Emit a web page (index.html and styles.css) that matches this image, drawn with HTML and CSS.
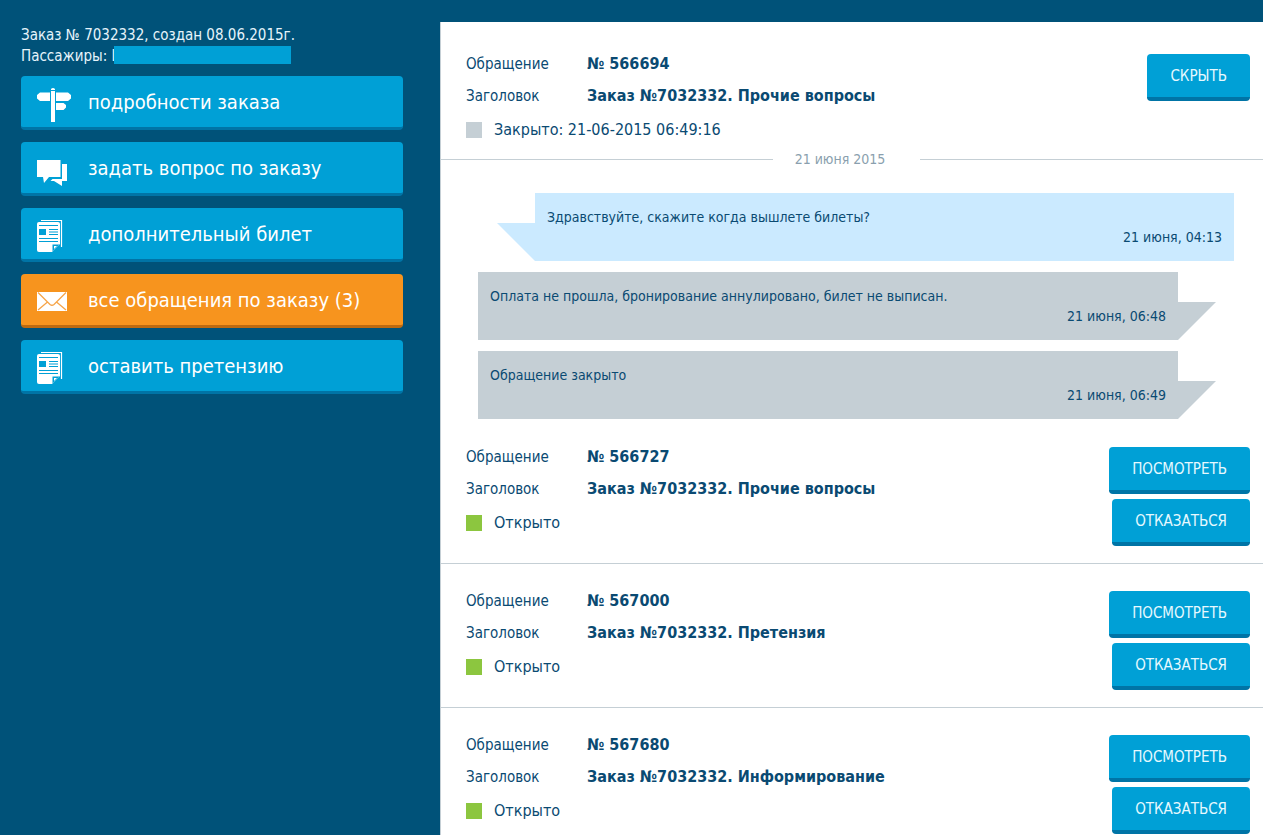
FILE: index.html
```html
<!DOCTYPE html>
<html lang="ru">
<head>
<meta charset="utf-8">
<title>Обращения по заказу</title>
<link rel="stylesheet" href="styles.css">
</head>
<body>
<svg class="sprite" aria-hidden="true">
  <symbol id="icon-doc" viewBox="0 0 34 40">
    <path d="M4 6.500H24.500V33" fill="none" stroke="#fff" stroke-width="1.200"/>
    <path d="M2 8H21Q23 8 23 10V30L15 38H2Q0 38 0 36V10Q0 8 2 8Z" fill="#fff"/>
    <path d="M2 11.500H21M12 15.500H21M12 18H21M12 20.500H21M2 24.500H21M2 27.500H21" stroke="#00a0d6" stroke-width="1.200"/>
    <path d="M2 15H9V21H2Z" fill="#00a0d6"/>
    <path d="M15.500 37.500V30.500H22.500Z" fill="#00a0d6"/>
    <path d="M17 35V32H20Z" fill="#fff"/>
  </symbol>
</svg>
<div class="page">
  <aside class="sidebar">
    <div class="order">
      <div>Заказ № 7032332, создан 08.06.2015г.</div>
      <div class="passengers">Пассажиры: L<span class="mask"></span></div>
    </div>
    <nav class="menu">
      <a class="menu-item" href="#details">
        <svg class="icon" viewBox="0 0 34 40" aria-hidden="true"><path fill="#fff" d="M14 7Q16 5 18 7V8H14ZM14 9H18V40H14ZM3 10.500H13V19H3L0 16.500V13ZM19 10.500H31L34 13V16.500L31 19H19ZM19 21H26.500L29 23V25.500L26.500 28H19Z"/></svg>
        <span>подробности заказа</span>
      </a>
      <a class="menu-item" href="#question">
        <svg class="icon" viewBox="0 0 34 40" aria-hidden="true"><path fill="#fff" d="M0 12H23.500V29H12L7 35L6 29H0ZM25 16H30V33H25V38L17 33H13.500L15.500 31H25Z"/></svg>
        <span>задать вопрос по заказу</span>
      </a>
      <a class="menu-item" href="#ticket">
        <svg class="icon" aria-hidden="true"><use href="#icon-doc"/></svg>
        <span>дополнительный билет</span>
      </a>
      <a class="menu-item menu-item-active" href="#requests" aria-current="page">
        <svg class="icon" viewBox="0 0 34 40" aria-hidden="true"><path fill="#fff" d="M0 12H30V31H0Z"/><path fill="none" stroke="#f6a54a" stroke-width="1.300" d="M1 12.500L13 24.500Q15 26 17 24.500L29 12.500M1 30L10.500 22M29 30L19.500 22"/></svg>
        <span>все обращения по заказу (3)</span>
      </a>
      <a class="menu-item" href="#claim">
        <svg class="icon" aria-hidden="true"><use href="#icon-doc"/></svg>
        <span>оставить претензию</span>
      </a>
    </nav>
  </aside>
  <main class="content">
    <section class="ticket ticket-open">
      <div class="info">
        <dl class="fields">
          <dt>Обращение</dt><dd>№ 566694</dd>
          <dt>Заголовок</dt><dd>Заказ №7032332. Прочие вопросы</dd>
        </dl>
        <div class="status"><span class="mark mark-closed"></span>Закрыто: 21-06-2015 06:49:16</div>
      </div>
      <div class="actions"><button class="btn" type="button">СКРЫТЬ</button></div>
    </section>
    <div class="day"><span class="line"></span><span>21 июня 2015</span><span class="line"></span></div>
    <div class="messages">
      <article class="msg msg-client"><p>Здравствуйте, скажите когда вышлете билеты?</p><time>21 июня, 04:13</time></article>
      <article class="msg msg-support"><p>Оплата не прошла, бронирование аннулировано, билет не выписан.</p><time>21 июня, 06:48</time></article>
      <article class="msg msg-support"><p>Обращение закрыто</p><time>21 июня, 06:49</time></article>
    </div>
    <section class="ticket">
      <div class="info">
        <dl class="fields">
          <dt>Обращение</dt><dd>№ 566727</dd>
          <dt>Заголовок</dt><dd>Заказ №7032332. Прочие вопросы</dd>
        </dl>
        <div class="status"><span class="mark"></span>Открыто</div>
      </div>
      <div class="actions"><button class="btn" type="button">ПОСМОТРЕТЬ</button><button class="btn" type="button">ОТКАЗАТЬСЯ</button></div>
    </section>
    <section class="ticket">
      <div class="info">
        <dl class="fields">
          <dt>Обращение</dt><dd>№ 567000</dd>
          <dt>Заголовок</dt><dd>Заказ №7032332. Претензия</dd>
        </dl>
        <div class="status"><span class="mark"></span>Открыто</div>
      </div>
      <div class="actions"><button class="btn" type="button">ПОСМОТРЕТЬ</button><button class="btn" type="button">ОТКАЗАТЬСЯ</button></div>
    </section>
    <section class="ticket">
      <div class="info">
        <dl class="fields">
          <dt>Обращение</dt><dd>№ 567680</dd>
          <dt>Заголовок</dt><dd>Заказ №7032332. Информирование</dd>
        </dl>
        <div class="status"><span class="mark"></span>Открыто</div>
      </div>
      <div class="actions"><button class="btn" type="button">ПОСМОТРЕТЬ</button><button class="btn" type="button">ОТКАЗАТЬСЯ</button></div>
    </section>
  </main>
</div>
</body>
</html>
```
FILE: styles.css
```css
* { box-sizing: border-box; }
html { height: 100%; }
body {
  margin: 0;
  height: 100%;
  overflow: hidden;
  background: #005279;
  color: #0a4a72;
  font-family: "DejaVu Sans Condensed", Tahoma, "Noto Sans", sans-serif;
  font-size: 16px;
}
.sprite { display: none; }
.page {
  display: grid;
  grid-template-columns: 440px 1fr;
  min-height: 100%;
}

/* sidebar */
.sidebar { padding: 25px 37px 0 21px; }
.order {
  color: #e6f4fb;
  font-size: 15px;
  line-height: 21px;
}
.passengers { display: flex; align-items: flex-start; white-space: pre; }
.mask {
  width: 177px;
  height: 18px;
  margin-left: -5px;
  background: #00a0d6;
}
.menu {
  display: flex;
  flex-direction: column;
  gap: 12px;
  margin-top: 9px;
}
.menu-item {
  display: flex;
  align-items: center;
  gap: 17px;
  height: 54px;
  padding: 0 16px;
  border-bottom: 3px solid #0074a6;
  border-radius: 4px;
  background: #00a0d6;
  color: #fff;
  font-size: 20px;
  text-decoration: none;
}
.menu-item-active { background: #f7941e; border-color: #bd6a10; }
.icon { flex: none; width: 34px; height: 40px; }

/* requests */
.content {
  margin-top: 22px;
  border-left: 1px solid #c5cfd5;
  background: #fff;
}
.ticket {
  display: flex;
  justify-content: space-between;
  padding: 21px 13px 17px 25px;
  border-bottom: 1px solid #c5cfd5;
}
.ticket-open { padding-top: 26px; padding-bottom: 3px; border-bottom: 0; }
.fields {
  display: grid;
  grid-template-columns: 121px auto;
  margin: 0;
  line-height: 32px;
}
.fields dt { font-size: 15px; }
.fields dd { margin: 0; font-weight: bold; }
.status {
  display: flex;
  align-items: center;
  gap: 12px;
  margin-top: 2px;
  line-height: 32px;
}
.mark { width: 16px; height: 16px; background: #8cc63f; }
.mark-closed { background: #c5cfd5; }
.actions {
  display: flex;
  flex-direction: column;
  align-items: flex-end;
  gap: 5px;
  margin-top: 6px;
}
.btn {
  height: 47px;
  padding: 0 23px;
  border: 0;
  border-bottom: 4px solid #0074a6;
  border-radius: 4px;
  background: #00a0d6;
  color: #e6f9ff;
  font-family: inherit;
  font-size: 15px;
}

/* conversation */
.day {
  display: grid;
  grid-template-columns: 332fr auto 343fr;
  align-items: center;
  color: #8a9fae;
  font-size: 14px;
  line-height: 20px;
}
.day span:nth-child(2) { padding: 0 35px 0 22px; }
.line { height: 1px; background: #c5cfd5; }
.messages {
  display: flex;
  flex-direction: column;
  gap: 11px;
  padding: 24px 29px 1px 37px;
}
.msg {
  position: relative;
  padding: 14px 12px;
  font-size: 14px;
  line-height: 20px;
}
.msg p { margin: 0; }
.msg time { display: block; text-align: right; }
.msg-client { margin-left: 57px; background: #cbeaff; }
.msg-support { margin-right: 56px; background: #c5cfd5; }
.msg::after {
  content: "";
  position: absolute;
  bottom: 0;
  width: 38px;
  height: 38px;
  background: inherit;
}
.msg-client::after { right: 100%; clip-path: polygon(0 0, 100% 0, 100% 100%); }
.msg-support::after { left: 100%; clip-path: polygon(0 0, 100% 0, 0 100%); }
```
